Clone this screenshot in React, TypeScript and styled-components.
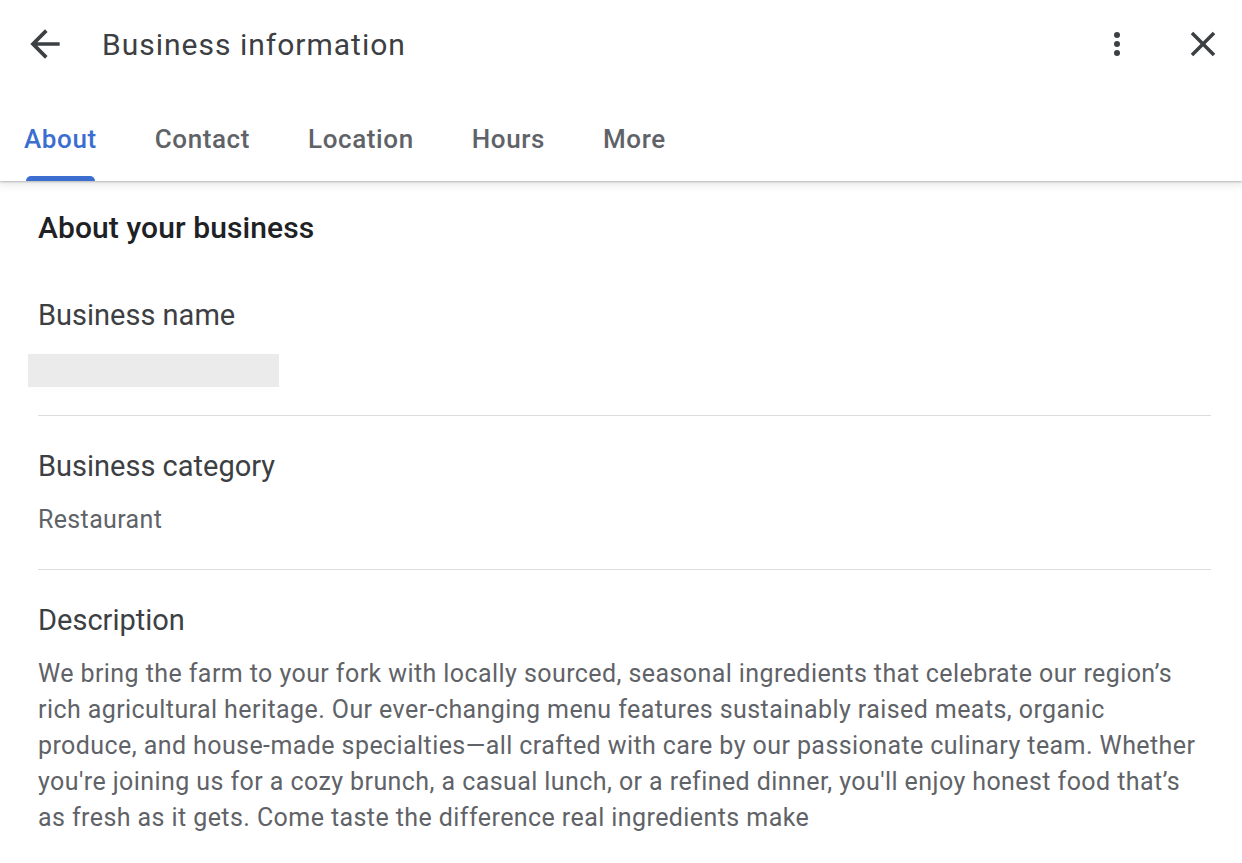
import * as React from "react";
import styled, { createGlobalStyle } from "styled-components";

const GlobalStyle = createGlobalStyle`
  html, body {
    margin: 0;
    padding: 0;
    background: #ffffff;
  }
  body {
    font-family: Roboto, "Liberation Sans", Arial, sans-serif;
    -webkit-font-smoothing: antialiased;
  }
`;

const Page = styled.div`
  width: 1242px;
  min-height: 863px;
  background: #fff;
  overflow: hidden;
`;

const Header = styled.header`
  position: relative;
  z-index: 1;
  background: #fff;
  box-shadow: 0 1px 2px rgba(60, 64, 67, 0.3), 0 2px 8px 2px rgba(60, 64, 67, 0.12);
`;

const TopBar = styled.div`
  height: 88px;
  display: flex;
  align-items: center;
  padding: 0 18px 0 23px;
`;

const IconButton = styled.button<{ $size: number }>`
  width: ${(p) => p.$size}px;
  height: ${(p) => p.$size}px;
  display: flex;
  align-items: center;
  justify-content: center;
  padding: 0;
  border: 0;
  background: none;
  color: #3c4043;
  cursor: pointer;

  svg {
    width: 100%;
    height: 100%;
    fill: currentColor;
  }
`;

const Title = styled.h1`
  flex: 1;
  margin: 0 0 0 35px;
  font-size: 30px;
  font-weight: 400;
  color: #3c4043;
  letter-spacing: 1px;
`;

const Actions = styled.div`
  display: flex;
  align-items: center;
  gap: 47px;
`;

const Tabs = styled.nav`
  display: flex;
  height: 93px;
`;

const Tab = styled.div<{ $active?: boolean }>`
  position: relative;
  display: flex;
  align-items: center;
  padding: 8px 29px 0 24px;
  font-size: 26px;
  font-weight: 500;
  letter-spacing: 0.6px;
  color: ${(p) => (p.$active ? "#3b6ecf" : "#5f6368")};

  & + & {
    padding-left: 29px;
  }

  &::after {
    content: "";
    display: ${(p) => (p.$active ? "block" : "none")};
    position: absolute;
    left: 26px;
    right: 31px;
    bottom: 0;
    height: 5px;
    border-radius: 5px 5px 0 0;
    background: #3b6ecf;
  }
`;

const Content = styled.main`
  padding: 0 31px 0 38px;
`;

const Heading = styled.h2`
  margin: 0 0 19px;
  padding-top: 29px;
  font-size: 30px;
  font-weight: 500;
  color: #202124;
  line-height: 36px;
  letter-spacing: 0.1px;
`;

const Field = styled.section<{ $last?: boolean }>`
  padding: ${(p) => (p.$last ? "32px 0 20px" : "32px 0 0")};
  border-bottom: ${(p) => (p.$last ? "none" : "1px solid #dadce0")};
`;

const Label = styled.div`
  font-size: 29px;
  line-height: 36px;
  color: #3c4043;
`;

const Value = styled.div`
  margin-top: 20px;
  padding-bottom: 33px;
  font-size: 25px;
  line-height: 32px;
  color: #5f6368;
  letter-spacing: 0.35px;
`;

const Paragraph = styled.p`
  margin: 18px 0 0;
  font-size: 25px;
  line-height: 36px;
  color: #5f6368;
  letter-spacing: 0.42px;
  white-space: nowrap;
`;

const Placeholder = styled.div`
  width: 251px;
  height: 33px;
  margin: 21px 0 28px -10px;
  background: #ebebeb;
`;

const BackIcon = () => (
  <svg viewBox="0 0 24 24">
    <path d="M20 11H7.83l5.59-5.59L12 4l-8 8 8 8 1.41-1.41L7.83 13H20v-2z" />
  </svg>
);

const MoreIcon = () => (
  <svg viewBox="0 0 24 24">
    <circle cx="12" cy="6" r="2" />
    <circle cx="12" cy="12" r="2" />
    <circle cx="12" cy="18" r="2" />
  </svg>
);

const CloseIcon = () => (
  <svg viewBox="0 0 24 24">
    <path d="M19 6.41 17.59 5 12 10.59 6.41 5 5 6.41 10.59 12 5 17.59 6.41 19 12 13.41 17.59 19 19 17.59 13.41 12z" />
  </svg>
);

const tabs = ["About", "Contact", "Location", "Hours", "More"];

export default function App() {
  return (
    <Page>
      <GlobalStyle />
      <Header>
        <TopBar>
          <IconButton $size={44} aria-label="Back">
            <BackIcon />
          </IconButton>
          <Title>Business information</Title>
          <Actions>
            <IconButton $size={36} aria-label="More options">
              <MoreIcon />
            </IconButton>
            <IconButton $size={42} aria-label="Close">
              <CloseIcon />
            </IconButton>
          </Actions>
        </TopBar>
        <Tabs>
          {tabs.map((t, i) => (
            <Tab key={t} $active={i === 0}>
              {t}
            </Tab>
          ))}
        </Tabs>
      </Header>
      <Content>
        <Heading>About your business</Heading>
        <Field>
          <Label>Business name</Label>
          <Placeholder />
        </Field>
        <Field>
          <Label>Business category</Label>
          <Value>Restaurant</Value>
        </Field>
        <Field $last>
          <Label>Description</Label>
          <Paragraph>
            We bring the farm to your fork with locally sourced, seasonal ingredients that celebrate our region’s
            <br />
            rich agricultural heritage. Our ever-changing menu features sustainably raised meats, organic
            <br />
            produce, and house-made specialties—all crafted with care by our passionate culinary team. Whether
            <br />
            you're joining us for a cozy brunch, a casual lunch, or a refined dinner, you'll enjoy honest food that’s
            <br />
            as fresh as it gets. Come taste the difference real ingredients make
          </Paragraph>
        </Field>
      </Content>
    </Page>
  );
}
